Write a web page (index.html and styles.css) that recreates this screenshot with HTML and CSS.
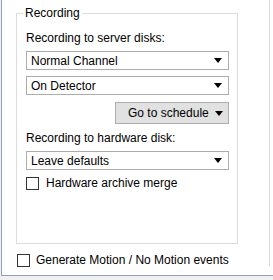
FILE: index.html
```html
<!DOCTYPE html>
<html lang="en">
<head>
  <meta charset="UTF-8" />
  <title>Recording settings</title>
  <link rel="stylesheet" href="styles.css">
</head>
<body>
  <div class="tab-page">
    <div class="pane">
      <div class="group">
        <span class="legend">Recording</span>

        <div class="label first">Recording to server disks:</div>
        <div class="combo"><span>Normal Channel</span><i class="arrow"></i></div>
        <div class="combo second"><span>On Detector</span><i class="arrow"></i></div>

        <div class="button-row">
          <div class="split-button"><span>Go to schedule</span><i class="arrow"></i></div>
        </div>

        <div class="label">Recording to hardware disk:</div>
        <div class="combo"><span>Leave defaults</span><i class="arrow"></i></div>

        <label class="check"><span class="box"></span>Hardware archive merge</label>
      </div>

      <label class="check bottom"><span class="box"></span>Generate Motion / No Motion events</label>
    </div>
  </div>
</body>
</html>
```

FILE: styles.css
```css
body {
  margin: 0;
  background: #f0f0f0;
  font-family: "Liberation Sans", Arial, sans-serif;
  font-size: 12px;
  color: #000;
  width: 273px;
  height: 280px;
  overflow: hidden;
}

.tab-page {
  margin-left: 1px;
  height: 275px;
  background: #fff;
  border-left: 1px solid #8e9fbf;
  border-bottom: 1px solid #8e9fbf;
}

.pane {
  width: 267px;
  height: 253px;
  padding-top: 13px;
  border-right: 1px solid #dadada;
}

.group {
  position: relative;
  margin-left: 14px;
  width: 203px;
  height: 229px;
  border: 1px solid #dcdcdc;
  padding: 0 8px 0 9px;
}

.legend {
  position: absolute;
  top: -9px;
  left: 6px;
  padding: 0 2px;
  background: #fff;
  line-height: 16px;
}

.label {
  line-height: 16px;
  margin-top: 6px;
}

.label.first {
  margin-top: 16px;
}

.combo {
  display: flex;
  align-items: center;
  justify-content: space-between;
  height: 17px;
  margin-top: 5px;
  border: 1px solid #acacac;
  padding: 0 6px 0 4px;
  background: #fff;
}

.combo.second {
  margin-top: 6px;
}

.arrow {
  width: 0;
  height: 0;
  border-left: 4.5px solid transparent;
  border-right: 4.5px solid transparent;
  border-top: 5px solid #000;
}

.button-row {
  display: flex;
  justify-content: flex-end;
  margin-top: 7px;
}

.split-button {
  display: flex;
  align-items: center;
  justify-content: space-between;
  width: 95px;
  height: 20px;
  border: 1px solid #adadad;
  background: #e1e1e1;
  padding: 0 5px 0 12px;
}

.check {
  display: flex;
  align-items: center;
  gap: 7px;
  line-height: 16px;
  margin-top: 5px;
}

.box {
  width: 11px;
  height: 11px;
  border: 1px solid #333;
  background: #fff;
}

.check.bottom {
  margin-left: 15px;
  margin-top: 8px;
  gap: 6px;
}
```
